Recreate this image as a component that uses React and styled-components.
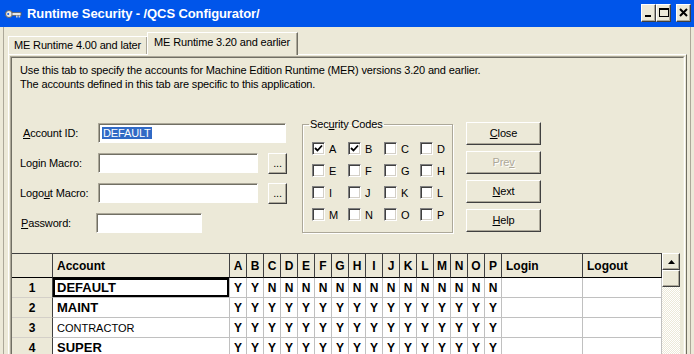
import React from "react";
import styled, { createGlobalStyle } from "styled-components";

const codes = "ABCDEFGHIJKLMNOP".split("");

const accounts = [
  { id: 1, name: "DEFAULT", bold: true, focus: true, codes: "YYNNNNNNNNNNNNNN" },
  { id: 2, name: "MAINT", bold: true, codes: "YYYYYYYYYYYYYYYY" },
  { id: 3, name: "CONTRACTOR", bold: false, codes: "YYYYYYYYYYYYYYYY" },
  { id: 4, name: "SUPER", bold: true, codes: "YYYYYYYYYYYYYYYY" },
];

const checkedCodes = ["A", "B"];

const GlobalStyle = createGlobalStyle`
  html, body {
    margin: 0;
    padding: 0;
    background: #ECE9D8;
  }
  body {
    font-family: "Liberation Sans", Arial, sans-serif;
    font-size: 11px;
    letter-spacing: -0.15px;
    color: #000;
  }
`;

const Window = styled.div`
  width: 694px;
  height: 354px;
  overflow: hidden;
  display: flex;
  flex-direction: column;
  background: #ECE9D8;
`;

const TitleBar = styled.div`
  height: 27px;
  flex-shrink: 0;
  display: flex;
  align-items: center;
  padding: 0 3px 0 5px;
  background: #0055EA;
  color: #fff;
`;

const TitleText = styled.div`
  margin-left: 5px;
  font-size: 13px;
  font-weight: bold;
  letter-spacing: -0.1px;
`;

const CaptionButtons = styled.div`
  margin-left: auto;
  align-self: flex-start;
  margin-top: 4px;
  display: flex;
`;

const CaptionButton = styled.div`
  width: 15px;
  height: 18px;
  box-sizing: border-box;
  margin-left: ${({ $gap }) => ($gap ? "5px" : "0")};
  background: #ECE9D8;
  border: 1px solid;
  border-color: #fff #404040 #404040 #fff;
  box-shadow: inset -1px -1px #ACA899;
  display: flex;
  align-items: center;
  justify-content: center;
`;

const Body = styled.div`
  flex: 1;
  min-height: 0;
  display: flex;
  flex-direction: column;
  margin: 0 3px;
  border-left: 1px solid #ACA899;
  border-right: 1px solid #ACA899;
  padding: 3px 3px 0 4px;
`;

const TabStrip = styled.div`
  height: 24px;
  flex-shrink: 0;
  display: flex;
  align-items: flex-end;
`;

const Tab = styled.div`
  position: relative;
  z-index: ${({ $active }) => ($active ? 1 : 0)};
  height: ${({ $active }) => ($active ? "23px" : "18px")};
  margin-bottom: ${({ $active }) => ($active ? "-1px" : "0")};
  margin-left: ${({ $active }) => ($active ? "-1px" : "0")};
  box-sizing: border-box;
  padding: ${({ $active }) => ($active ? "3px 7px 0 6px" : "2px 6px 0 5px")};
  line-height: 13px;
  background: #ECE9D8;
  border-top: 1px solid #fff;
  border-left: 1px solid #fff;
  border-right: 1px solid #716F64;
  box-shadow: inset -1px 0 #ACA899;
  white-space: nowrap;
`;

const Sheet = styled.div`
  flex: 1;
  min-height: 0;
  display: flex;
  border-top: 1px solid #fff;
  border-left: 1px solid #fff;
  border-right: 1px solid #716F64;
  padding: 1px 1px 0 1px;
`;

const Well = styled.div`
  flex: 1;
  display: flex;
  border: 1px solid;
  border-color: #ACA899 #fff #fff #ACA899;
  border-bottom: none;
`;

const Pane = styled.div`
  flex: 1;
  display: flex;
  flex-direction: column;
  border: 1px solid;
  border-color: #716F64 #F1EFE2 #F1EFE2 #716F64;
  border-bottom: none;
  overflow: hidden;
`;

const Intro = styled.div`
  height: 33px;
  padding: 5px 0 0 8px;
  box-sizing: border-box;
  line-height: 14px;
`;

const FormArea = styled.div`
  margin-top: 25px;
  height: 137px;
  flex-shrink: 0;
  display: flex;
  padding-left: 8px;
  box-sizing: border-box;
`;

const Fields = styled.div`
  width: 282px;
  padding-top: 7px;
  display: flex;
  flex-direction: column;
  gap: 10px;
`;

const FieldRow = styled.div`
  height: 20px;
  display: flex;
  align-items: center;
`;

const Label = styled.div`
  width: 78px;
  padding-left: ${({ $indent }) => $indent || 0}px;
  box-sizing: border-box;
  flex-shrink: 0;
`;

const TextBox = styled.div`
  width: ${({ $w }) => $w}px;
  height: 20px;
  margin-left: ${({ $shift }) => $shift || 0}px;
  box-sizing: border-box;
  background: #fff;
  border: 1px solid;
  border-color: #ACA899 #fff #fff #ACA899;
  box-shadow: inset 1px 1px #716F64;
  padding: 2px 0 0 3px;
  line-height: 14px;
`;

const Selected = styled.span`
  background: #316AC5;
  color: #fff;
  padding: 0 1px;
`;

const DotsButton = styled.div`
  width: 19px;
  height: 21px;
  margin-left: 10px;
  box-sizing: border-box;
  border: 1px solid;
  border-color: #fff #404040 #404040 #fff;
  box-shadow: inset -1px -1px #ACA899;
  text-align: center;
  line-height: 18px;
`;

const Group = styled.fieldset`
  margin: 2px 0 0 0;
  width: 151px;
  height: 115px;
  box-sizing: border-box;
  padding: 11px 0 0 9px;
  border: 1px solid #ACA899;
  box-shadow: 1px 1px 0 #fff, inset 1px 1px 0 #fff;
  min-width: 0;
`;

const Legend = styled.legend`
  margin-left: -3px;
  padding: 0 1px;
  line-height: 13px;
`;

const CheckGrid = styled.div`
  display: grid;
  grid-template-columns: repeat(4, 36px);
  grid-auto-rows: 13px;
  row-gap: 9px;
`;

const CheckItem = styled.div`
  display: flex;
  align-items: center;
  gap: 4px;
`;

const Box = styled.div`
  width: 13px;
  height: 13px;
  box-sizing: border-box;
  background: #fff;
  border: 1px solid;
  border-color: #808080 #fff #fff #808080;
  box-shadow: inset 1px 1px #404040, inset -1px -1px #D4D0C8;
  display: flex;
  align-items: center;
  justify-content: center;
`;

const ButtonColumn = styled.div`
  margin-left: 13px;
  padding-top: 6px;
  display: flex;
  flex-direction: column;
  gap: 6px;
`;

const PushButton = styled.div`
  width: 75px;
  height: 23px;
  box-sizing: border-box;
  border: 1px solid;
  border-color: #fff #404040 #404040 #fff;
  box-shadow: inset -1px -1px #ACA899;
  text-align: center;
  line-height: 20px;
  color: ${({ $disabled }) => ($disabled ? "#ACA899" : "#000")};
  text-shadow: ${({ $disabled }) => ($disabled ? "1px 1px #fff" : "none")};
`;

const GridArea = styled.div`
  flex: 1;
  min-height: 0;
  display: flex;
`;

const Grid = styled.div`
  width: 650px;
  font-family: "Liberation Sans", Arial, sans-serif;
  letter-spacing: 0;
`;

const Row = styled.div`
  display: grid;
  grid-template-columns: 41px 177px repeat(16, 17px) 81px 79px;
  height: ${({ $h }) => $h}px;
`;

const HeadCell = styled.div`
  box-sizing: border-box;
  background: #ECE9D8;
  border-top: 1px solid #404040;
  border-right: 1px solid #404040;
  border-bottom: 1px solid #000;
  font-size: 12px;
  font-weight: bold;
  display: flex;
  align-items: center;
  justify-content: ${({ $left }) => ($left ? "flex-start" : "center")};
  padding-left: ${({ $left }) => ($left ? "4px" : "0")};
`;

const RowHead = styled.div`
  box-sizing: border-box;
  background: #ECE9D8;
  border-right: 1px solid #404040;
  border-bottom: 1px solid #D4D0C8;
  font-size: 12px;
  font-weight: bold;
  display: flex;
  align-items: center;
  justify-content: center;
`;

const Cell = styled.div`
  box-sizing: border-box;
  background: #fff;
  border-right: 1px solid #C0C0C0;
  border-bottom: 1px solid #C0C0C0;
  font-size: 12px;
  font-weight: bold;
  display: flex;
  align-items: center;
  justify-content: center;
`;

const AccountCell = styled.div`
  box-sizing: border-box;
  background: #fff;
  border-right: 1px solid #C0C0C0;
  border-bottom: 1px solid #C0C0C0;
  box-shadow: ${({ $focus }) => ($focus ? "inset 0 0 0 2px #000" : "none")};
  padding-left: 4px;
  font-size: ${({ $bold }) => ($bold ? "13px" : "11px")};
  font-weight: ${({ $bold }) => ($bold ? "bold" : "normal")};
  display: flex;
  align-items: center;
`;

const ScrollBar = styled.div`
  width: 18px;
  display: flex;
  flex-direction: column;
`;

const ScrollPiece = styled.div`
  height: 17px;
  flex-shrink: 0;
  box-sizing: border-box;
  background: #ECE9D8;
  border: 1px solid;
  border-color: #fff #404040 #404040 #fff;
  box-shadow: inset -1px -1px #ACA899;
  display: flex;
  align-items: center;
  justify-content: center;
`;

const ScrollTrack = styled.div`
  flex: 1;
  background-image: conic-gradient(#fff 25%, #ECE9D8 0 50%, #fff 0 75%, #ECE9D8 0);
  background-size: 2px 2px;
`;

const KeyIcon = () => (
  <svg width="17" height="10" viewBox="0 0 17 10">
    <circle cx="4" cy="5" r="3.5" fill="#E8E8E8" stroke="#606060" />
    <circle cx="3.2" cy="5" r="1" fill="#0055EA" />
    <rect x="7" y="3.5" width="9" height="3" fill="#E8E8E8" stroke="#606060" strokeWidth="0.8" />
    <rect x="11" y="6.5" width="1.6" height="2" fill="#D0D0D0" />
    <rect x="13.6" y="6.5" width="1.6" height="2" fill="#D0D0D0" />
  </svg>
);

const Check = () => (
  <svg width="9" height="9" viewBox="0 0 9 9">
    <path d="M1 4 L3.5 6.5 L8 1.5" fill="none" stroke="#000" strokeWidth="1.8" />
  </svg>
);

export default function App() {
  return (
    <>
      <GlobalStyle />
      <Window>
        <TitleBar>
          <KeyIcon />
          <TitleText>Runtime Security - /QCS Configurator/</TitleText>
          <CaptionButtons>
            <CaptionButton>
              <svg width="13" height="16" viewBox="0 0 13 16">
                <rect x="3" y="10" width="6" height="2" fill="#000" />
              </svg>
            </CaptionButton>
            <CaptionButton>
              <svg width="13" height="16" viewBox="0 0 13 16">
                <rect x="2.5" y="3.5" width="9" height="8" fill="none" stroke="#000" />
                <rect x="2" y="3" width="10" height="2" fill="#000" />
              </svg>
            </CaptionButton>
            <CaptionButton $gap>
              <svg width="13" height="16" viewBox="0 0 13 16">
                <path d="M3 4 L10 11 M10 4 L3 11" stroke="#000" strokeWidth="2" />
              </svg>
            </CaptionButton>
          </CaptionButtons>
        </TitleBar>
        <Body>
          <TabStrip>
            <Tab>ME Runtime 4.00 and later</Tab>
            <Tab $active>ME Runtime 3.20 and earlier</Tab>
          </TabStrip>
          <Sheet>
            <Well>
              <Pane>
                <Intro>
                  Use this tab to specify the accounts for Machine Edition Runtime (MER) versions 3.20 and earlier.
                  <br />
                  The accounts defined in this tab are specific to this application.
                </Intro>
                <FormArea>
                  <Fields>
                    <FieldRow>
                      <Label $indent={3}><u>A</u>ccount ID:</Label>
                      <TextBox $w={188}><Selected>DEFAULT</Selected></TextBox>
                    </FieldRow>
                    <FieldRow>
                      <Label>Lo<u>g</u>in Macro:</Label>
                      <TextBox $w={160} />
                      <DotsButton>...</DotsButton>
                    </FieldRow>
                    <FieldRow>
                      <Label>Logo<u>u</u>t Macro:</Label>
                      <TextBox $w={160} />
                      <DotsButton>...</DotsButton>
                    </FieldRow>
                    <FieldRow>
                      <Label $indent={1}><u>P</u>assword:</Label>
                      <TextBox $w={106} $shift={-2} />
                    </FieldRow>
                  </Fields>
                  <Group>
                    <Legend>Sec<u>u</u>rity Codes</Legend>
                    <CheckGrid>
                      {codes.map((c) => (
                        <CheckItem key={c}>
                          <Box>{checkedCodes.includes(c) && <Check />}</Box>
                          {c}
                        </CheckItem>
                      ))}
                    </CheckGrid>
                  </Group>
                  <ButtonColumn>
                    <PushButton><u>C</u>lose</PushButton>
                    <PushButton $disabled>Pre<u>v</u></PushButton>
                    <PushButton><u>N</u>ext</PushButton>
                    <PushButton><u>H</u>elp</PushButton>
                  </ButtonColumn>
                </FormArea>
                <GridArea>
                  <Grid>
                    <Row $h={25}>
                      <HeadCell />
                      <HeadCell $left>Account</HeadCell>
                      {codes.map((c) => (
                        <HeadCell key={c}>{c}</HeadCell>
                      ))}
                      <HeadCell $left>Login</HeadCell>
                      <HeadCell $left>Logout</HeadCell>
                    </Row>
                    {accounts.map((a) => (
                      <Row key={a.id} $h={20}>
                        <RowHead>{a.id}</RowHead>
                        <AccountCell $bold={a.bold} $focus={a.focus}>{a.name}</AccountCell>
                        {a.codes.split("").map((v, i) => (
                          <Cell key={i}>{v}</Cell>
                        ))}
                        <Cell />
                        <Cell />
                      </Row>
                    ))}
                  </Grid>
                  <ScrollBar>
                    <ScrollPiece>
                      <svg width="7" height="4" viewBox="0 0 7 4">
                        <path d="M0 4 L3.5 0 L7 4 Z" fill="#000" />
                      </svg>
                    </ScrollPiece>
                    <ScrollPiece />
                    <ScrollTrack />
                  </ScrollBar>
                </GridArea>
              </Pane>
            </Well>
          </Sheet>
        </Body>
      </Window>
    </>
  );
}
